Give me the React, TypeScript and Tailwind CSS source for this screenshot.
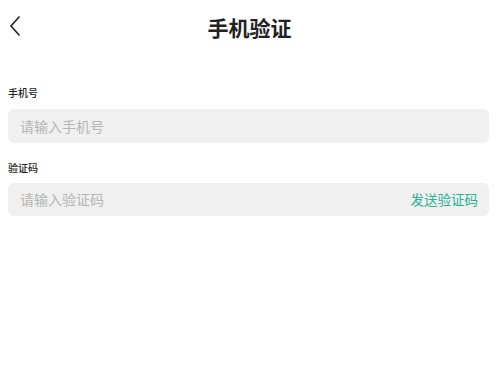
export default function App() {
  return (
    <div
      className="w-[499px] h-[374px] bg-white text-[#222]"
      style={{ fontFamily: '"Noto Sans CJK SC", "Noto Sans", sans-serif' }}
    >
      <div className="relative h-[54px] flex items-center justify-center">
        <button className="absolute left-[9px] top-[15px] w-[12px] h-[22px]">
          <svg width="12" height="22" viewBox="0 0 12 22" fill="none">
            <path d="M10.5 1.5 L2 11 L10.5 20.5" stroke="#222" strokeWidth="1.6" />
          </svg>
        </button>
        <h1 className="text-[21px] font-bold leading-none">手机验证</h1>
      </div>

      <div className="px-[8px] pt-[34px] pr-[10px]">
        <div className="text-[10px] leading-none font-medium">手机号</div>
        <div className="mt-[11px] h-[34px] rounded-[6px] bg-[#f0f0f0] flex items-center px-[12px]">
          <span className="text-[14px] text-[#b5b5b5]">请输入手机号</span>
        </div>

        <div className="mt-[20px] text-[10px] leading-none font-medium">验证码</div>
        <div className="mt-[10px] h-[33px] rounded-[6px] bg-[#f0f0f0] flex items-center justify-between pl-[12px] pr-[11px]">
          <span className="text-[14px] text-[#b5b5b5]">请输入验证码</span>
          <span className="text-[13.5px] text-[#2ab195]">发送验证码</span>
        </div>
      </div>
    </div>
  );
}
